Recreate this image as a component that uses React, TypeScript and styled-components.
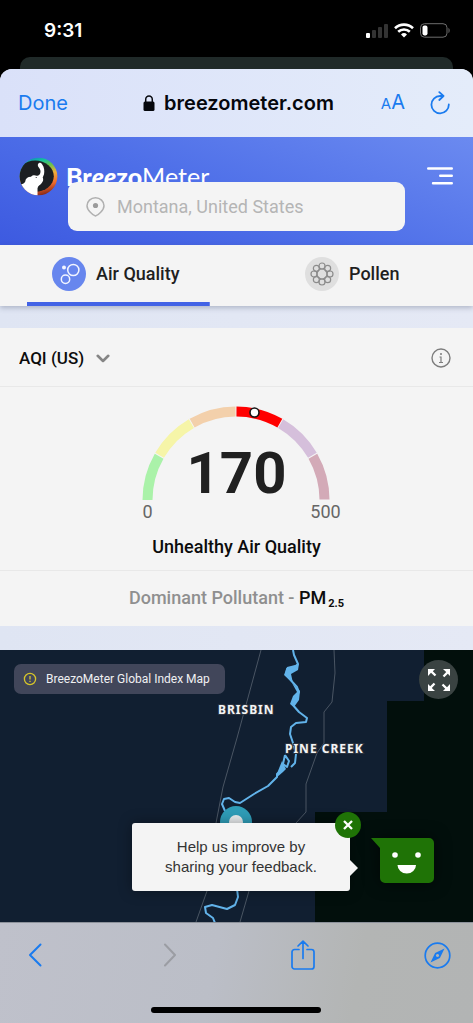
import React from "react";
import styled, { createGlobalStyle } from "styled-components";

const system = `Inter, "Liberation Sans", sans-serif`;
const brand = `Roboto, "Liberation Sans", sans-serif`;
const blue = "#1a7bef";
const surface = "#f4f4f4";

const GlobalStyle = createGlobalStyle`
  *, *::before, *::after { box-sizing: border-box; }
  body { margin: 0; background: #000; font-family: ${brand}; }
  button, input, select { font: inherit; color: inherit; }
`;

const Screen = styled.div`
  display: flex;
  flex-direction: column;
  min-height: 100vh;
  background: #000;
`;

const StatusBar = styled.header`
  display: flex;
  align-items: center;
  justify-content: space-between;
  height: 57px;
  padding: 4px 23px 0 44px;
  font: 600 19px/24px ${system};
  color: #fff;
`;

const StatusIcons = styled.div`
  display: flex;
  align-items: center;
  gap: 6px;
`;

const BackCard = styled.div`
  height: 12px;
  margin: 0 20px;
  border-radius: 10px 10px 0 0;
  background: #202a29;
`;

const Sheet = styled.div`
  display: flex;
  flex: 1;
  flex-direction: column;
  overflow: hidden;
  border-radius: 12px 12px 0 0;
  background: linear-gradient(90deg, #dfe5f3, #e5e9f5);
`;

const AddressBar = styled.div`
  display: grid;
  grid-template-columns: 1fr auto 1fr;
  align-items: center;
  height: 68px;
  padding: 0 22px 0 18px;
  background: linear-gradient(90deg, #dae1f9, #e4ecfa);
  font-family: ${system};
`;

const PlainButton = styled.button`
  display: inline-flex;
  align-items: center;
  justify-content: center;
  padding: 0;
  border: 0;
  background: none;
  cursor: pointer;
`;

const DoneButton = styled(PlainButton)`
  justify-self: start;
  font-size: 20px;
  line-height: 24px;
  color: ${blue};
`;

const Domain = styled.div`
  display: flex;
  align-items: center;
  gap: 9px;
  padding-left: 8px;
  font-size: 20px;
  line-height: 24px;
  font-weight: 600;
  color: #05070c;
`;

const AddressActions = styled.div`
  display: flex;
  align-items: center;
  justify-content: flex-end;
  gap: 24px;
  color: ${blue};
`;

const TextSizeButton = styled(PlainButton)`
  align-items: baseline;
  font-size: 20px;
  line-height: 24px;
  small { font-size: 15px; }
`;

const SiteHeader = styled.header`
  padding: 20px 20px 14px 19px;
  background: linear-gradient(20deg, #3d5ae0, #4d6ee8 45%, #6b8af0);
`;

const BrandRow = styled.div`
  display: flex;
  align-items: center;
  justify-content: space-between;
  height: 38px;
`;

const BrandLink = styled.a`
  display: flex;
  align-items: center;
  gap: 8px;
  color: #fff;
  text-decoration: none;
  font: 400 25px/30px Lato, sans-serif;
  b { font-weight: 900; }
`;

const SearchBox = styled.label`
  position: relative;
  display: flex;
  align-items: center;
  gap: 12px;
  height: 49px;
  margin: -13px 48px 0 49px;
  padding: 0 18px;
  border-radius: 9px;
  background: ${surface};
`;

const SearchInput = styled.input`
  flex: 1;
  min-width: 0;
  padding: 0;
  border: 0;
  outline: 0;
  background: none;
  font-size: 18px;
  line-height: 24px;
  &::placeholder { color: #b5b5b5; opacity: 1; }
`;

const Tabs = styled.nav`
  display: grid;
  grid-template-columns: 1fr 1fr;
  height: 61px;
  background: ${surface};
  box-shadow: 0 2px 5px rgba(60, 70, 100, 0.3);
`;

const Tab = styled.button<{ $active?: boolean }>`
  display: flex;
  align-items: center;
  justify-content: center;
  gap: 10px;
  margin: 0 27px;
  padding: 0 5px 4px 0;
  border: 0;
  background: linear-gradient(${(p) => (p.$active ? "#4263e6, #4263e6" : "transparent, transparent")}) bottom / 100% 4px no-repeat;
  font-size: 18px;
  line-height: 24px;
  font-weight: 500;
  color: #1f1f1f;
  cursor: pointer;
`;

const IndexCard = styled.section`
  margin: 22px 0 24px;
  background: ${surface};
  color: #0c0c0c;
`;

const CardHead = styled.div`
  display: flex;
  align-items: center;
  justify-content: space-between;
  height: 59px;
  padding: 2px 22px 0 19px;
  border-bottom: 1px solid #e8e8e8;
  color: #7d7d7d;
`;

const IndexPicker = styled.label`
  display: flex;
  align-items: center;
  svg { margin-left: -14px; pointer-events: none; }
`;

const IndexSelect = styled.select`
  appearance: none;
  field-sizing: content;
  padding: 0 26px 0 0;
  border: 0;
  background: none;
  font-size: 17px;
  line-height: 24px;
  font-weight: 500;
  color: #0c0c0c;
`;

const GaugeArea = styled.div`
  display: flex;
  flex-direction: column;
  align-items: center;
  height: 184px;
  padding-top: 13px;
  border-bottom: 1px solid #e8e8e8;
`;

const Gauge = styled.div`
  display: grid;
  justify-items: center;
  align-items: end;
  height: 101px;
  > * { grid-area: 1 / 1; }
`;

const GaugeValue = styled.strong`
  font-size: 58px;
  line-height: 56px;
  font-weight: 700;
  color: #202020;
`;

const GaugeLimits = styled.div`
  display: flex;
  justify-content: space-between;
  width: 218px;
  font-size: 18px;
  line-height: 22px;
  color: #666;
  span { width: 40px; text-align: center; }
`;

const Verdict = styled.p`
  margin: 12px 0 0;
  font-size: 18px;
  line-height: 24px;
  font-weight: 500;
`;

const Pollutant = styled.p`
  margin: 0;
  height: 55px;
  font-size: 18px;
  line-height: 54px;
  font-weight: 500;
  text-align: center;
  color: #8f8f8f;
  b { font-weight: 500; color: #0c0c0c; }
  sub { margin-left: 2px; font-size: 11px; line-height: 0; font-weight: 700; vertical-align: -3px; }
`;

const MapPanel = styled.section`
  position: relative;
  flex: 1;
  min-height: 272px;
  background: #111f31;
`;

const MapCanvas = styled.svg`
  position: absolute;
  inset: 0;
  width: 100%;
  height: 100%;
  text {
    font: 700 12px "Noto Sans", sans-serif;
    letter-spacing: 1px;
    fill: #f4f4f6;
    stroke: #2c3440;
    stroke-width: 2px;
    paint-order: stroke;
  }
`;

const MapBadge = styled.div`
  position: absolute;
  top: 14px;
  left: 14px;
  display: flex;
  align-items: center;
  gap: 9px;
  height: 30px;
  padding: 0 15px 0 9px;
  border-radius: 7px;
  background: #41465a;
  font-size: 12px;
  line-height: 16px;
  color: #f0f0f2;
`;

const ExpandButton = styled(PlainButton)`
  position: absolute;
  top: 10px;
  right: 15px;
  width: 39px;
  height: 39px;
  border-radius: 50%;
  background: #3a4342;
  color: #fff;
`;

const Feedback = styled.div`
  position: absolute;
  right: 123px;
  bottom: 31px;
  width: 218px;
  padding: 14px 28px;
  border-radius: 3px;
  background: ${surface};
  box-shadow: 0 0 14px rgba(0, 0, 0, 0.35);
  font: 15px/20px "Liberation Sans", Arial, sans-serif;
  text-align: center;
  color: #333;
  &::after {
    content: "";
    position: absolute;
    top: 37px;
    left: 100%;
    border: 8px solid transparent;
    border-left-color: ${surface};
    border-right-width: 0;
  }
`;

const CloseButton = styled(PlainButton)`
  position: absolute;
  top: -11px;
  right: -11px;
  width: 26px;
  height: 26px;
  border-radius: 50%;
  background: #1f7306;
  color: #fff;
`;

const SmileButton = styled(PlainButton)`
  position: absolute;
  right: 39px;
  bottom: 39px;
  filter: drop-shadow(0 0 8px rgba(0, 0, 0, 0.6));
`;

const BottomBar = styled.footer`
  display: flex;
  flex-direction: column;
  justify-content: space-between;
  height: 101px;
  padding: 15px 21px 10px 20px;
  background: linear-gradient(100deg, #bfc1cb, #bbbec7 45%, #b3b5b4 75%, #b2b4b4);
  border-top: 1px solid #8d929b;
`;

const Toolbar = styled.nav`
  display: flex;
  justify-content: space-between;
  color: ${blue};
`;

const ToolButton = styled(PlainButton)`
  width: 30px;
  height: 34px;
  &:disabled { color: #9b9da3; }
`;

const HomeIndicator = styled.div`
  align-self: center;
  width: 36vw;
  height: 6px;
  border-radius: 3px;
  background: #000;
`;

const SEGMENTS = ["#aaf2a9", "#f6f5a8", "#f3d0ab", "#ff0000", "#d5bfdb", "#d3aab7"];

function point(deg: number, r: number) {
  const a = (deg * Math.PI) / 180;
  return `${(100 - r * Math.cos(a)).toFixed(2)} ${(100 - r * Math.sin(a)).toFixed(2)}`;
}

function GaugeDial() {
  return (
    <svg width="201" height="101" viewBox="0 0 201 101" fill="none" aria-hidden="true">
      {SEGMENTS.map((color, i) => (
        <path
          key={color}
          d={`M${point(i * 30 + (i ? 0.3 : 0), 88.5)}A88.5 88.5 0 0 1 ${point(i * 30 + 29.7, 88.5)}`}
          stroke={color}
          strokeWidth="10"
        />
      ))}
      <circle cx="118.5" cy="12.5" r="4.5" fill="#fff" stroke="#151515" strokeWidth="1.6" />
    </svg>
  );
}

function StatusGlyphs() {
  return (
    <StatusIcons>
      <svg width="22" height="15" viewBox="0 0 22 15">
        <rect x="0" y="10" width="4" height="5" rx="1" fill="#fff" />
        <rect x="6" y="7" width="4" height="8" rx="1" fill="#333" />
        <rect x="12" y="4" width="4" height="11" rx="1" fill="#333" />
        <rect x="18" y="1" width="4" height="14" rx="1" fill="#333" />
      </svg>
      <svg width="20" height="15" viewBox="0 0 20 15" fill="none" stroke="#fff" strokeWidth="2.6">
        <path d="M1 5.2a13 13 0 0 1 18 0M4.2 8.8a8.4 8.4 0 0 1 11.6 0" />
        <path d="M10 14.6l-3-3.2a4.4 4.4 0 0 1 6 0z" fill="#fff" stroke="none" />
      </svg>
      <svg width="30" height="15" viewBox="0 0 30 15">
        <rect x="0.5" y="0.7" width="26.5" height="13.5" rx="4" fill="none" stroke="#6d6d6d" />
        <rect x="2.5" y="2.6" width="5" height="9.8" rx="1.8" fill="#fff" />
        <path d="M28.5 5v5c1.5-.6 1.5-4.4 0-5z" fill="#6d6d6d" />
      </svg>
    </StatusIcons>
  );
}

function ElephantLogo() {
  return (
    <svg width="39" height="39" viewBox="0 0 120 120" aria-hidden="true">
      <defs>
        <clipPath id="disc"><circle cx="60" cy="60" r="58" /></clipPath>
        <linearGradient id="ring" x1="0.35" y1="0" x2="0.62" y2="1">
          <stop offset="0" stopColor="#1683c4" />
          <stop offset="0.14" stopColor="#14c49a" />
          <stop offset="0.3" stopColor="#6cc04a" />
          <stop offset="0.5" stopColor="#f0b03a" />
          <stop offset="0.75" stopColor="#ee6a2c" />
          <stop offset="1" stopColor="#7c2013" />
        </linearGradient>
      </defs>
      <g clipPath="url(#disc)">
        <rect width="120" height="120" fill="url(#ring)" />
        <ellipse cx="50" cy="59" rx="57" ry="48" fill="#1c1f22" />
        <path
          d="M0 82C8 86 15 83 19 76C20 66 27 61 37 61C42 55 50 56 54 58C62 58 67 51 66 42C65 34 57 31 58 24C60 17 67 16 71 22C78 31 79 43 77 53L73 63C76 69 74 75 70 80C67 85 58 88 57 96V120H0Z"
          fill="#fff"
        />
        <circle cx="53" cy="63" r="1.8" fill="#1c1f22" />
      </g>
    </svg>
  );
}

function PollenIcon() {
  const petals = Array.from({ length: 8 }, (_, i) => (i * Math.PI) / 4);
  return (
    <svg width="34" height="34" viewBox="0 0 34 34" fill="none" stroke="#8c8c8c" strokeWidth="1.2" aria-hidden="true">
      <circle cx="17" cy="17" r="17" fill="#dfdfdf" stroke="none" />
      <circle cx="17" cy="17" r="5" />
      {petals.map((a) => (
        <circle key={a} cx={17 + 8 * Math.cos(a)} cy={17 + 8 * Math.sin(a)} r="3" />
      ))}
    </svg>
  );
}

function IndexMap() {
  return (
    <MapCanvas viewBox="0 0 473 272" preserveAspectRatio="xMidYMin slice" role="img" aria-label="Map of Brisbin and Pine Creek">
      <rect width="473" height="272" fill="#111f31" />
      <path d="M424 0h49v272H315V162h72V51h37z" fill="#020f0c" />
      <g fill="none" stroke="#4a5563" strokeWidth="1">
        <path d="M261 0L237 88L223 137L216 173L207 241L196 272" />
        <path d="M334 0L335 23L332 52L324 62V93L317 103L306 134V162L296 173L249 241L240 272" />
      </g>
      <g fill="none" stroke="#62b3ea" strokeWidth="2" strokeLinejoin="round">
        <path d="M293 0L294 5L298 14L294 18L287 19L286 25L297 37L299 42L292 54L299 62L307 68L306 72L296 73L291 77L290 84L293 93L296 104L295 113L291 117" />
        <path d="M285 105L283 114L287 117L289 111L285 105M284 117L277 124L277 127L268 136L254 144L240 153L235 152L229 148L224 149L222 154L225 161" />
        <path d="M237 239L238 247L235 255L227 259L212 255L205 257L206 263L213 268L215 273" />
      </g>
      <g fill="#62b3ea">
        <path d="M287 17L299 14L298 20L291 24L293 33L284 25Z" />
        <path d="M292 33L300 41L299 50L294 57L290 54L293 46L297 42Z" />
        <path d="M282 111L286 119L283 122L276 128L278 121Z" />
      </g>
      <circle cx="236" cy="172" r="16" fill="#2f9db8" />
      <circle cx="236" cy="172" r="7" fill="#e9ecee" />
      <text x="218" y="64">BRISBIN</text>
      <text x="285" y="103">PINE CREEK</text>
    </MapCanvas>
  );
}

export default function App() {
  return (
    <Screen>
      <GlobalStyle />
      <StatusBar>
        <time>9:31</time>
        <StatusGlyphs />
      </StatusBar>
      <BackCard />
      <Sheet>
        <AddressBar>
          <DoneButton>Done</DoneButton>
          <Domain>
            <svg width="12" height="16" viewBox="0 0 12 16" aria-hidden="true">
              <rect x="0.5" y="6.5" width="11" height="9.5" rx="1.5" fill="currentColor" />
              <path d="M2.7 7V4.5a3.3 3.5 0 0 1 6.6 0V7" fill="none" stroke="currentColor" strokeWidth="1.5" />
            </svg>
            breezometer.com
          </Domain>
          <AddressActions>
            <TextSizeButton aria-label="Text size"><small>A</small>A</TextSizeButton>
            <PlainButton aria-label="Reload">
              <svg width="22" height="24" viewBox="0 0 22 24" fill="none" stroke="currentColor" strokeWidth="1.8" strokeLinecap="round" strokeLinejoin="round">
                <path d="M19.8 13.5A8.7 8.7 0 1 1 11.1 5H14.5M10.3 1.2L14.5 5L10.3 9" />
              </svg>
            </PlainButton>
          </AddressActions>
        </AddressBar>

        <SiteHeader>
          <BrandRow>
            <BrandLink href="#home">
              <ElephantLogo />
              <span><b>Br<i>ee</i>zo</b>Meter</span>
            </BrandLink>
            <PlainButton aria-label="Menu">
              <svg width="26" height="18" viewBox="0 0 26 18" fill="none" stroke="#fff" strokeWidth="2.4" strokeLinecap="round">
                <path d="M1.2 1.5H24.8M13.2 8.8H24.8M6 16.2H24.8" />
              </svg>
            </PlainButton>
          </BrandRow>
          <SearchBox>
            <svg width="19" height="20" viewBox="0 0 19 20" fill="none" stroke="#b0b0b0" strokeWidth="1.5" aria-hidden="true">
              <path d="M9.5 19C7 18.5 1 13 1 8.7a8.5 7.9 0 0 1 17 0C18 13 12 18.5 9.5 19Z" />
              <circle cx="9.5" cy="8.5" r="2.6" fill="#9b9b9b" stroke="none" />
            </svg>
            <SearchInput type="text" placeholder="Montana, United States" aria-label="Location" />
          </SearchBox>
        </SiteHeader>

        <Tabs>
          <Tab $active>
            <svg width="34" height="34" viewBox="0 0 34 34" fill="none" stroke="#f2f5ff" strokeWidth="1.5" aria-hidden="true">
              <circle cx="17" cy="17" r="17" fill="#6786ee" stroke="none" />
              <circle cx="21.3" cy="13" r="5.6" />
              <circle cx="13.5" cy="22.3" r="4.2" />
              <circle cx="12" cy="10.5" r="2" fill="#f2f5ff" stroke="none" />
            </svg>
            <span>Air Quality</span>
          </Tab>
          <Tab>
            <PollenIcon />
            <span>Pollen</span>
          </Tab>
        </Tabs>

        <IndexCard>
          <CardHead>
            <IndexPicker>
              <IndexSelect aria-label="Air quality index">
                <option>AQI (US)</option>
              </IndexSelect>
              <svg width="14" height="9" viewBox="0 0 14 9" fill="none" stroke="#858585" strokeWidth="2.6" strokeLinecap="round" strokeLinejoin="round">
                <path d="M1.7 1.8L7 7L12.3 1.8" />
              </svg>
            </IndexPicker>
            <PlainButton aria-label="About this index">
              <svg width="20" height="20" viewBox="0 0 20 20" fill="none" stroke="currentColor" strokeWidth="1.4">
                <circle cx="10" cy="10" r="9" />
                <path d="M8.5 9H10V14.5M8 14.5H12" strokeWidth="1.2" />
                <circle cx="10" cy="6" r="1" fill="currentColor" stroke="none" />
              </svg>
            </PlainButton>
          </CardHead>
          <GaugeArea>
            <Gauge>
              <GaugeDial />
              <GaugeValue>170</GaugeValue>
            </Gauge>
            <GaugeLimits><span>0</span><span>500</span></GaugeLimits>
            <Verdict>Unhealthy Air Quality</Verdict>
          </GaugeArea>
          <Pollutant>Dominant Pollutant - <b>PM<sub>2.5</sub></b></Pollutant>
        </IndexCard>

        <MapPanel>
          <IndexMap />
          <MapBadge>
            <svg width="14" height="14" viewBox="0 0 14 14" fill="none" stroke="#d6c52a" strokeWidth="1.3" aria-hidden="true">
              <circle cx="7" cy="7" r="5.6" />
              <path d="M7 4v3.6M7 8.8v1.3" />
            </svg>
            BreezoMeter Global Index Map
          </MapBadge>
          <ExpandButton aria-label="Full screen">
            <svg width="24" height="24" viewBox="0 0 24 24" fill="currentColor">
              {[0, 90, 180, 270].map((deg) => (
                <path key={deg} transform={`rotate(${deg} 12 12)`} d="M1 1H8L5.8 3.2L9.3 6.7L7.7 8.3L4 4.8L1 8Z" />
              ))}
            </svg>
          </ExpandButton>
          <Feedback>
            Help us improve by sharing your feedback.
            <CloseButton aria-label="Close">
              <svg width="10" height="10" viewBox="0 0 10 10" stroke="currentColor" strokeWidth="2.3">
                <path d="M1 1L9 9M9 1L1 9" />
              </svg>
            </CloseButton>
          </Feedback>
          <SmileButton aria-label="Give feedback">
            <svg width="63" height="45" viewBox="0 0 63 45">
              <path d="M0 0H58a5 5 0 0 1 5 5V40a5 5 0 0 1-5 5H14a5 5 0 0 1-5-5V10Z" fill="#1f7306" />
              <circle cx="24" cy="17" r="2.8" fill="#fff" />
              <circle cx="47" cy="17" r="2.8" fill="#fff" />
              <path d="M26.5 27H45A9.2 8.5 0 0 1 26.5 27Z" fill="#fff" />
            </svg>
          </SmileButton>
        </MapPanel>

        <BottomBar>
          <Toolbar>
            <ToolButton aria-label="Back">
              <svg width="14" height="24" viewBox="0 0 14 24" fill="none" stroke="currentColor" strokeWidth="2" strokeLinecap="round" strokeLinejoin="round">
                <path d="M12.5 1.5L2 12L12.5 22.5" />
              </svg>
            </ToolButton>
            <ToolButton aria-label="Forward" disabled>
              <svg width="14" height="24" viewBox="0 0 14 24" fill="none" stroke="currentColor" strokeWidth="2" strokeLinecap="round" strokeLinejoin="round">
                <path d="M3 1.5L13 12L3 22.5" />
              </svg>
            </ToolButton>
            <ToolButton aria-label="Share">
              <svg width="24" height="30" viewBox="0 0 24 30" fill="none" stroke="currentColor" strokeWidth="1.7" strokeLinecap="round" strokeLinejoin="round">
                <path d="M8 9.5H3.5A2.5 2.5 0 0 0 1 12V26.5A2.5 2.5 0 0 0 3.5 29H20.5A2.5 2.5 0 0 0 23 26.5V12A2.5 2.5 0 0 0 20.5 9.5H16M12 18.5V1.5M7 6L12 1.2L17 6" />
              </svg>
            </ToolButton>
            <ToolButton aria-label="Open in browser">
              <svg width="27" height="27" viewBox="0 0 27 27" fill="none" stroke="currentColor" strokeWidth="1.7">
                <circle cx="13.5" cy="13.5" r="12.3" />
                <path fillRule="evenodd" fill="currentColor" stroke="none" d="M20.5 6.5L15.9 15.9L6.5 20.5L11.1 11.1ZM13.5 11.9a1.6 1.6 0 1 0 .01 0Z" />
              </svg>
            </ToolButton>
          </Toolbar>
          <HomeIndicator />
        </BottomBar>
      </Sheet>
    </Screen>
  );
}
